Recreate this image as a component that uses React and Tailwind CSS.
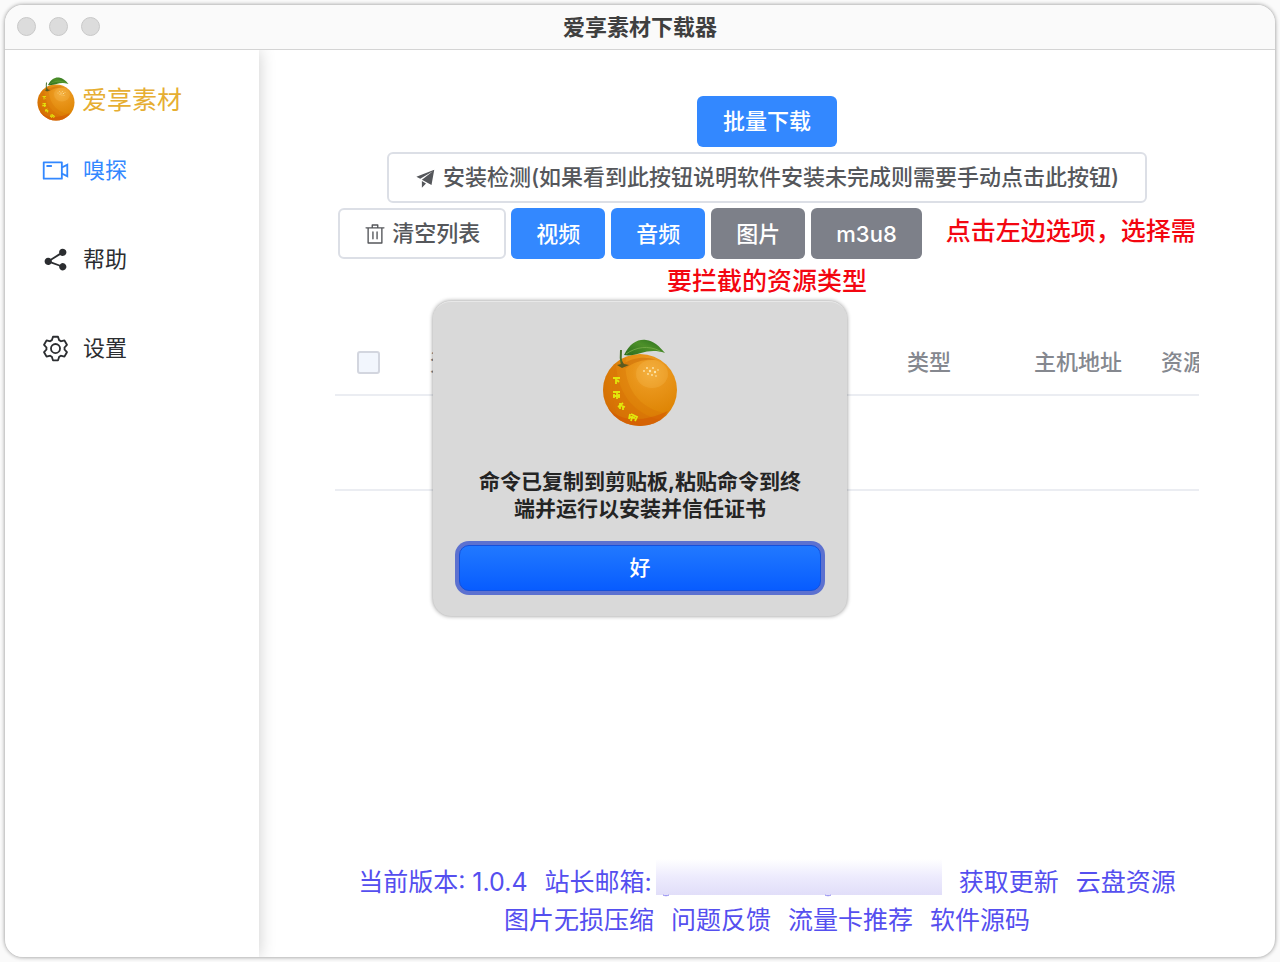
import React from 'react';

const ICONS = {
  video:
    'M704 768V256H128v512zm64-416 192-96v512l-192-96v128a32 32 0 0 1-32 32H96a32 32 0 0 1-32-32V224a32 32 0 0 1 32-32h640a32 32 0 0 1 32 32zm0 71.552v176.896l128 64V359.552zM192 320h192v64H192z',
  share:
    'm679.872 348.8-301.76 188.608a127.808 127.808 0 0 1 5.12 52.16l279.936 104.96a128 128 0 1 1-22.464 59.904l-279.872-104.96a128 128 0 1 1-16.64-166.272l301.696-188.608a128 128 0 1 1 33.92 54.272z',
  setting:
    'M600.704 64a32 32 0 0 1 30.464 22.208l35.2 109.376c14.784 7.232 28.928 15.36 42.432 24.512l112.384-24.192a32 32 0 0 1 34.432 15.36L944.32 364.8a32 32 0 0 1-4.032 37.504l-77.12 85.12a357.12 357.12 0 0 1 0 49.024l77.12 85.248a32 32 0 0 1 4.032 37.504l-88.704 153.6a32 32 0 0 1-34.432 15.296L708.8 803.904c-13.44 9.088-27.648 17.28-42.368 24.512l-35.264 109.376A32 32 0 0 1 600.704 960H423.296a32 32 0 0 1-30.464-22.208L357.696 828.48a351.616 351.616 0 0 1-42.56-24.64l-112.32 24.256a32 32 0 0 1-34.432-15.36L79.68 659.2a32 32 0 0 1 4.032-37.504l77.12-85.248a357.12 357.12 0 0 1 0-48.896l-77.12-85.248A32 32 0 0 1 79.68 364.8l88.704-153.6a32 32 0 0 1 34.432-15.296l112.32 24.256c13.568-9.152 27.776-17.408 42.56-24.64l35.2-109.312A32 32 0 0 1 423.232 64H600.64zm-23.424 64H446.72l-36.352 113.088-24.512 11.968a294.113 294.113 0 0 0-34.816 20.096l-22.656 15.36-116.224-25.088-65.28 113.152 79.68 88.192-1.92 27.136a293.12 293.12 0 0 0 0 40.192l1.92 27.136-79.808 88.192 65.344 113.152 116.224-25.024 22.656 15.296a294.113 294.113 0 0 0 34.816 20.096l24.512 11.968L446.72 896h130.688l36.48-113.152 24.448-11.904a288.282 288.282 0 0 0 34.752-20.096l22.592-15.296 116.288 25.024 65.28-113.152-79.744-88.192 1.92-27.136a293.12 293.12 0 0 0 0-40.256l-1.92-27.136 79.808-88.128-65.344-113.152-116.288 24.96-22.592-15.232a287.616 287.616 0 0 0-34.752-20.096l-24.448-11.904L577.344 128zM512 320a192 192 0 1 1 0 384 192 192 0 0 1 0-384m0 64a128 128 0 1 0 0 256 128 128 0 0 0 0-256',
  promotion:
    'm64 448 832-320-128 704-446.08-243.328L832 192 242.816 545.536zm256 512V657.024L512 768z',
  trash:
    'M160 256H96a32 32 0 0 1 0-64h256V95.936a32 32 0 0 1 32-32h256a32 32 0 0 1 32 32V192h256a32 32 0 1 1 0 64h-64v672a32 32 0 0 1-32 32H192a32 32 0 0 1-32-32zm448-64v-64H416v64zM224 896h576V256H224zm192-128a32 32 0 0 1-32-32V416a32 32 0 0 1 64 0v320a32 32 0 0 1-32 32m192 0a32 32 0 0 1-32-32V416a32 32 0 0 1 64 0v320a32 32 0 0 1-32 32',
};

const Icon = ({ name, className }) => (
  <svg viewBox="0 0 1024 1024" fill="currentColor" className={className} aria-hidden="true">
    <path d={ICONS[name]} />
  </svg>
);

const Orange = ({ id, className }) => (
  <svg viewBox="0 0 76 90" className={className} aria-hidden="true">
    <defs>
      <radialGradient id={`${id}-skin`} cx="0.64" cy="0.26" r="0.8">
        <stop offset="0" stopColor="#f4ac38" />
        <stop offset="0.3" stopColor="#e9951a" />
        <stop offset="0.7" stopColor="#df8606" />
        <stop offset="1" stopColor="#d47204" />
      </radialGradient>
      <linearGradient id={`${id}-leaf`} x1="0" y1="1" x2="1" y2="0.2">
        <stop offset="0" stopColor="#2b6a1c" />
        <stop offset="0.6" stopColor="#4d9029" />
        <stop offset="1" stopColor="#2f7420" />
      </linearGradient>
      <clipPath id={`${id}-clip`}>
        <ellipse cx="38" cy="52" rx="37" ry="36" />
      </clipPath>
    </defs>
    <ellipse cx="38" cy="52" rx="37" ry="36" fill={`url(#${id}-skin)`} />
    <g clipPath={`url(#${id}-clip)`}>
      <path d="M14 22C14 50 28 76 60 82L48 92H-4V30z" fill="#d06005" opacity="0.35" />
      <path d="M24 20C20 48 38 74 70 76L56 92 20 88C8 66 8 40 16 20z" fill="#d97608" opacity="0.4" />
      <path d="M6 70c14 15 36 14 60 3L52 92H10z" fill="#d24c03" opacity="0.4" />
      <path d="M20 27c10-8 24-9 34-5-10-1-21 1-30 8z" fill="#c96a08" opacity="0.5" />
      <ellipse cx="50" cy="36" rx="16" ry="14" fill="#f6bb51" opacity="0.3" />
    </g>
    <g fill="#fde6ad">
      <circle cx="42" cy="33" r="0.9" />
      <circle cx="45" cy="30" r="0.9" />
      <circle cx="48" cy="33" r="1.2" />
      <circle cx="51" cy="30" r="0.9" />
      <circle cx="53" cy="34" r="1.2" />
      <circle cx="46" cy="36" r="0.9" />
      <circle cx="50" cy="37" r="0.9" />
      <circle cx="56" cy="32" r="0.8" />
      <circle cx="54" cy="38" r="0.8" />
    </g>
    <path d="M20 28c-1-4-2-8-1-16" fill="none" stroke="#47702a" strokeWidth="2" />
    <path d="M15 27l5 3 7-3-5-1-2-3-1 3z" fill="#5b5a20" />
    <path d="M22 17C28 5 36 1 44 2c8 1 13 6 19 13-9-3-17-2-24 0-7 2-12 3-17 2z" fill={`url(#${id}-leaf)`} />
    <path d="M24 16C34 9 46 7 58 13" fill="none" stroke="#79ad4a" strokeWidth="0.8" />
    <g fill="none" stroke="#e2e60c" strokeWidth="1.8">
      <path d="M11 40h7M14 40v6M15 42l2 2" />
      <path d="M11 54h7M12 56v4M15 53v8M17 56v4M11 58h7" />
      <path d="M16 69l5-4M18 65v6M17 67l6 2M21 68v4" />
      <path d="M28 76l-1 5M31 76l-2 7M29 76l6 3-2 4M28 79l5 1" />
    </g>
  </svg>
);

const menus = [
  { icon: 'video', label: '嗅探', active: true },
  { icon: 'share', label: '帮助' },
  { icon: 'setting', label: '设置' },
];

const types = [
  { label: '视频', on: true },
  { label: '音频', on: true },
  { label: '图片', on: false },
  { label: 'm3u8', on: false },
];

const Sidebar = () => (
  <aside className="relative z-10 w-[254px] shrink-0 bg-white pl-8 pt-[26px] shadow-[0_0_16px_rgba(0,0,0,0.2)]">
    <div className="flex items-end gap-[7px]">
      <Orange id="logo" className="h-[46px] w-[38px]" />
      <span className="text-[25px] leading-[44px] text-[#e6ae32]">爱享素材</span>
    </div>
    <nav className="mt-1">
      {menus.map((menu) => (
        <a
          key={menu.label}
          href="#"
          className={`flex h-[89px] items-center gap-[13px] pl-1 text-[22px] ${
            menu.active ? 'text-[#3388ff]' : 'text-[#2b2d30]'
          }`}
        >
          <Icon name={menu.icon} className="h-[29px] w-[29px]" />
          <span>{menu.label}</span>
        </a>
      ))}
    </nav>
  </aside>
);

const Toolbar = () => (
  <div className="text-center text-[22px] font-medium">
    <div className="flex flex-col items-center gap-[5px]">
      <button type="button" className="h-[51px] rounded-md bg-[#3388ff] px-[26px] text-white">
        批量下载
      </button>
      <button
        type="button"
        className="flex h-[51px] items-center gap-[6px] rounded-md border-2 border-[#dcdfe6] px-[26px] text-[#55575b]"
      >
        <Icon name="promotion" className="h-[22px] w-[22px]" />
        <span>安装检测(如果看到此按钮说明软件安装未完成则需要手动点击此按钮)</span>
      </button>
    </div>
    {/* 红色提示跟在按钮后面，放不下时换行 */}
    <div className="mt-[5px] text-[25px] leading-[45px] text-[#f30610]">
      <button
        type="button"
        className="mr-[5px] inline-flex h-[51px] items-center gap-[6px] rounded-md border-2 border-[#dcdfe6] px-6 align-middle text-[22px] text-[#55575b]"
      >
        <Icon name="trash" className="h-[22px] w-[22px]" />
        <span>清空列表</span>
      </button>
      {types.map((type) => (
        <button
          key={type.label}
          type="button"
          aria-pressed={type.on}
          className={`mr-[6px] h-[51px] rounded-md px-[25px] align-middle text-[22px] leading-8 text-white ${
            type.on ? 'bg-[#3388ff]' : 'bg-[#7d8089]'
          }`}
        >
          {type.label}
        </button>
      ))}
      <span className="ml-[18px]">点击左边选项，选择需</span>
      <span>要拦截的资源类型</span>
    </div>
  </div>
);

const ResourceTable = () => (
  <div className="mt-[27px] overflow-hidden">
    <table className="w-[1000px] table-fixed border-collapse text-left text-[22px] text-[#85888f]">
      <thead>
        <tr className="h-16 border-b-2 border-[#ebedf2]">
          <th className="w-[77px] pl-[22px]">
            <input
              type="checkbox"
              aria-label="全选"
              className="block h-[23px] w-[23px] appearance-none rounded-[3px] border-2 border-[#d3d6df] bg-[#f2f6fd]"
            />
          </th>
          <th className="w-[476px] pl-[18px] font-medium">资源</th>
          <th className="w-[127px] pl-[19px] font-medium">类型</th>
          <th className="w-[127px] pl-[19px] font-medium">主机地址</th>
          <th className="pl-[19px] font-medium">资源</th>
        </tr>
      </thead>
      <tbody>
        <tr className="h-[95px] border-b-2 border-[#ebedf2]">
          <td colSpan={5} />
        </tr>
      </tbody>
    </table>
  </div>
);

const Footer = () => (
  <footer className="mt-auto pb-[18px] text-[25px] leading-[38px] text-[#554fef]">
    <div className="flex justify-center gap-[17px] whitespace-nowrap">
      <span>当前版本: 1.0.4</span>
      <span className="flex gap-1">
        站长邮箱:
        <span className="relative -mt-1 h-9 w-[286px] bg-linear-to-b from-white via-[#edebfd] to-[#e1def9]">
          <svg viewBox="0 0 286 40" className="absolute left-0 top-0 h-10 w-[286px]" aria-hidden="true">
            <path d="M7 36c2 1 4 1 6 0M169 36c2 1 4 1 6 0" fill="none" stroke="#8a84f0" />
          </svg>
        </span>
      </span>
      <a href="#">获取更新</a>
      <a href="#">云盘资源</a>
    </div>
    <div className="flex justify-center gap-[17px] whitespace-nowrap">
      <a href="#">图片无损压缩</a>
      <a href="#">问题反馈</a>
      <a href="#">流量卡推荐</a>
      <a href="#">软件源码</a>
    </div>
  </footer>
);

const CertDialog = () => (
  <div
    role="dialog"
    aria-labelledby="cert-message"
    className="absolute left-1/2 top-[296px] z-20 flex w-[414px] -translate-x-1/2 flex-col items-center rounded-[18px] border-t border-[#e8e8e8] bg-[#d9d9d9] px-[26px] pb-[25px] pt-9 shadow-[0_0_4px_rgba(0,0,0,0.45)]"
  >
    <Orange id="dialog" className="h-[90px] w-[76px]" />
    <p id="cert-message" className="mt-10 text-center text-[21px] font-bold leading-[27px] text-[#242424]">
      命令已复制到剪贴板,粘贴命令到终
      <br />
      端并运行以安装并信任证书
    </p>
    <button
      type="button"
      className="mt-[23px] h-[46px] w-full rounded-[10px] border border-[#1450dc] bg-[#1169ff] bg-linear-to-b from-[#2279ff] to-[#075bff] bg-origin-border text-[21px] font-medium text-white ring-4 ring-[#5c71d0]"
    >
      好
    </button>
  </div>
);

const App = () => {
  return (
    <div className="flex min-h-screen bg-[#fafafa] p-[5px] font-[Inter,'Noto_Sans_CJK_SC',sans-serif]">
      <div className="relative flex flex-1 flex-col overflow-hidden rounded-[18px] bg-white shadow-[0_0_4px_rgba(0,0,0,0.45)]">
        <header className="grid h-[45px] shrink-0 grid-cols-[1fr_auto_1fr] items-center border-b border-[#d4d4d4] bg-[#fafafa] px-3 pb-px">
          <div className="flex gap-[13px]">
            <span className="h-[19px] w-[19px] rounded-full border border-[#c8c8c8] bg-[#dcdcdc]" />
            <span className="h-[19px] w-[19px] rounded-full border border-[#c8c8c8] bg-[#dcdcdc]" />
            <span className="h-[19px] w-[19px] rounded-full border border-[#c8c8c8] bg-[#dcdcdc]" />
          </div>
          <h1 className="text-[22px] font-bold leading-8 text-[#3f3f3f]">爱享素材下载器</h1>
        </header>
        <div className="flex flex-1 overflow-hidden">
          <Sidebar />
          <main className="flex min-w-0 flex-1 flex-col px-[76px] pt-[46px]">
            <Toolbar />
            <ResourceTable />
            <Footer />
          </main>
        </div>
        <CertDialog />
      </div>
    </div>
  );
};

export default App;
